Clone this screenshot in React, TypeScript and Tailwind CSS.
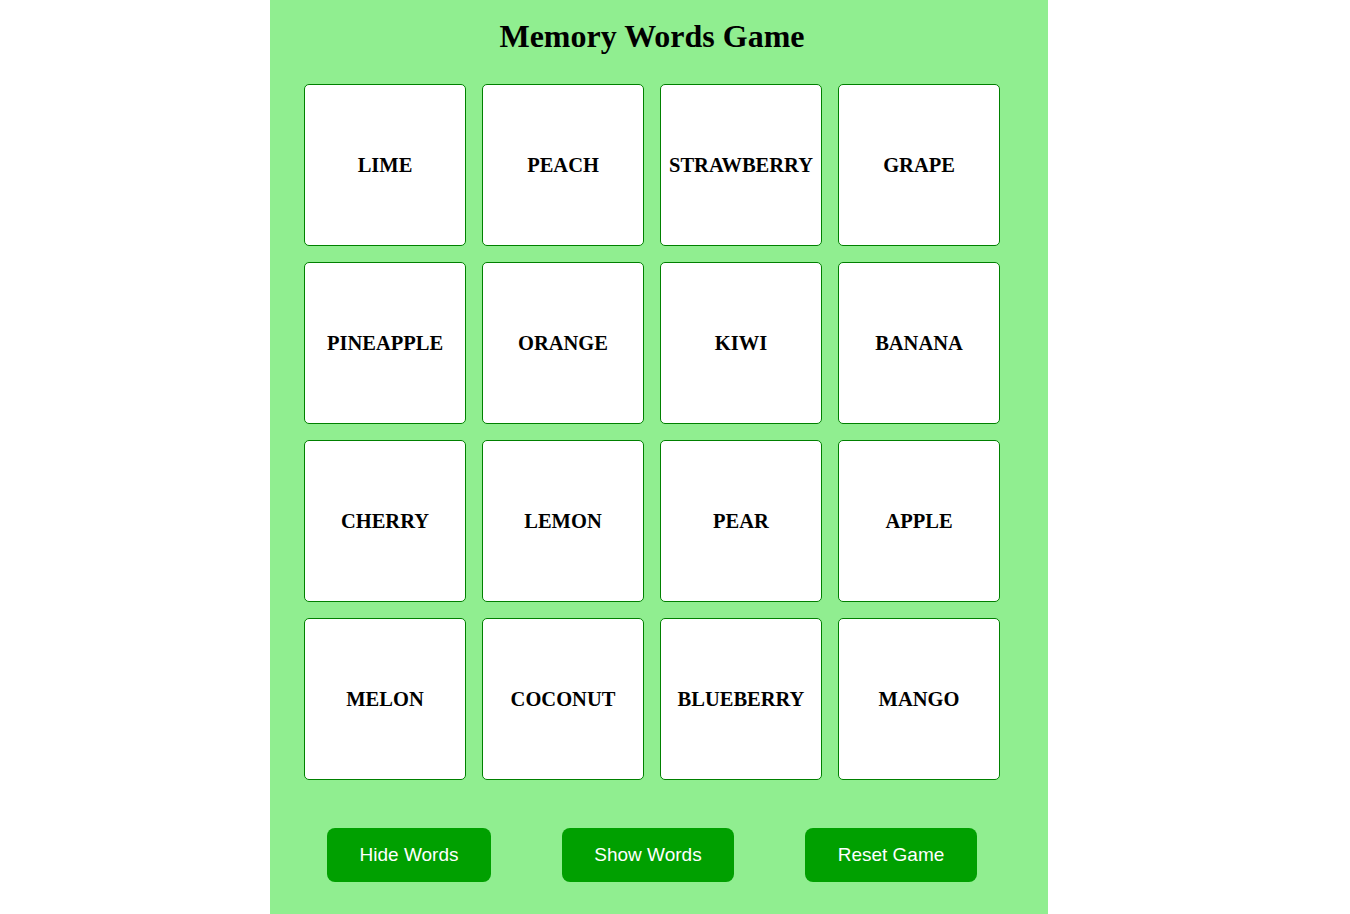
import React, { useState } from 'react'

const WORDS = [
  'LIME', 'PEACH', 'STRAWBERRY', 'GRAPE',
  'PINEAPPLE', 'ORANGE', 'KIWI', 'BANANA',
  'CHERRY', 'LEMON', 'PEAR', 'APPLE',
  'MELON', 'COCONUT', 'BLUEBERRY', 'MANGO'
]

const App: React.FC = () => {
  const [visible, setVisible] = useState(true)

  return (
    <div className="min-h-screen w-full bg-white flex justify-center pr-[32px]">
      <div className="w-[778px] min-h-screen bg-[#90ee90] pl-[34px] pr-[48px] pt-[18px] pb-[32px]">
        <h1 className="text-center text-[32px] leading-[37px] font-bold text-black font-['Liberation_Serif',serif]">
          Memory Words Game
        </h1>

        <div className="mt-[29px] grid grid-cols-[repeat(4,162px)] gap-4">
          {WORDS.map((word) => (
            <div
              key={word}
              className="h-[162px] bg-white border border-[#008000] rounded-[5px] flex items-center justify-center"
            >
              <span className="text-[20.5px] font-bold text-black font-['Liberation_Serif',serif]">
                {visible ? word : ''}
              </span>
            </div>
          ))}
        </div>

        <div className="mt-12 flex pl-[23px] gap-[71px]">
          <button
            onClick={() => setVisible(false)}
            className="h-[54px] w-[164px] rounded-lg bg-[#00a000] text-white text-[19px] font-['Liberation_Sans',Arial,sans-serif]"
          >
            Hide Words
          </button>
          <button
            onClick={() => setVisible(true)}
            className="h-[54px] w-[172px] rounded-lg bg-[#00a000] text-white text-[19px] font-['Liberation_Sans',Arial,sans-serif]"
          >
            Show Words
          </button>
          <button
            onClick={() => setVisible(true)}
            className="h-[54px] w-[172px] rounded-lg bg-[#00a000] text-white text-[19px] font-['Liberation_Sans',Arial,sans-serif]"
          >
            Reset Game
          </button>
        </div>
      </div>
    </div>
  )
}

export default App
